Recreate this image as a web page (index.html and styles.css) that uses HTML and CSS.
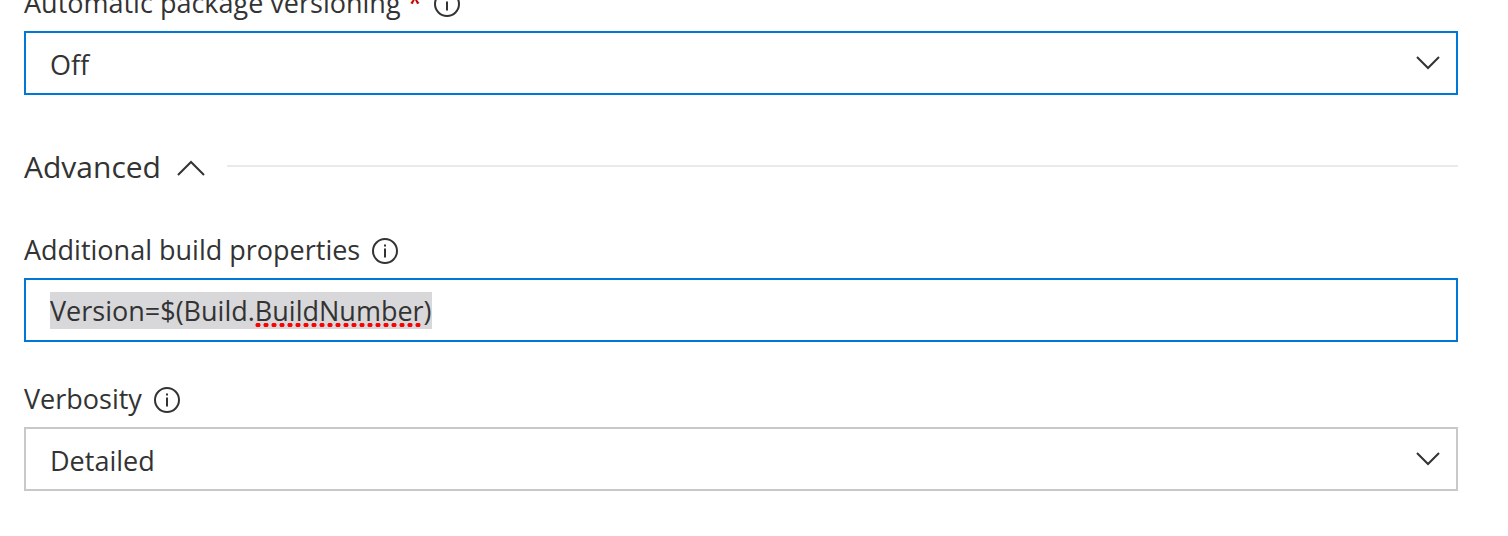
FILE: index.html
```html
<!DOCTYPE html>
<html lang="en">

<head>
    <meta charset="UTF-8">
    <meta name="viewport" content="width=device-width, initial-scale=1.0">
    <title>Build task</title>
    <link rel="stylesheet" href="styles.css">
</head>

<body>
    <form class="panel" onsubmit="return false;">
        <div class="field">
            <div class="field-label">
                <label for="versioning">Automatic package versioning <span class="required">*</span></label>
                <svg class="info" viewBox="0 0 28 28" aria-hidden="true">
                    <circle cx="14" cy="14" r="12" />
                    <path d="M14 11.5v9M14 7.5v2" />
                </svg>
            </div>
            <div class="select-wrap">
                <select id="versioning" class="box active">
                    <option>Off</option>
                </select>
                <svg class="chevron" viewBox="0 0 24 14" aria-hidden="true">
                    <path d="M1 1l11 11L23 1" />
                </svg>
            </div>
        </div>

        <div class="section">
            <button type="button" class="section-toggle" aria-expanded="true">
                Advanced
                <svg class="caret" viewBox="0 0 28 16" aria-hidden="true">
                    <path d="M1 15L14 2l13 13" />
                </svg>
            </button>
            <span class="section-line"></span>
        </div>

        <div class="field">
            <div class="field-label">
                <label for="properties">Additional build properties</label>
                <svg class="info" viewBox="0 0 28 28" aria-hidden="true">
                    <circle cx="14" cy="14" r="12" />
                    <path d="M14 11.5v9M14 7.5v2" />
                </svg>
            </div>
            <div class="input-wrap">
                <input type="text" id="properties" class="box active" value="Version=$(Build.BuildNumber)" spellcheck="false">
                <span class="misspelled"></span>
            </div>
        </div>

        <div class="field">
            <div class="field-label">
                <label for="verbosity">Verbosity</label>
                <svg class="info" viewBox="0 0 28 28" aria-hidden="true">
                    <circle cx="14" cy="14" r="12" />
                    <path d="M14 11.5v9M14 7.5v2" />
                </svg>
            </div>
            <div class="select-wrap">
                <select id="verbosity" class="box">
                    <option>Detailed</option>
                </select>
                <svg class="chevron" viewBox="0 0 24 14" aria-hidden="true">
                    <path d="M1 1l11 11L23 1" />
                </svg>
            </div>
        </div>
    </form>
    <script>
        var properties = document.querySelector("#properties");
        properties.focus({ preventScroll: true });
        properties.select();
    </script>
</body>
</html>
```
FILE: styles.css
```css
* {
    box-sizing: border-box;
}

body {
    margin: 0;
    background-color: #fff;
    color: #333;
    font-family: "Open Sans", "Noto Sans", sans-serif;
    font-size: 27px;
    overflow: hidden;
}

/* the panel is scrolled a little past its first label */
.panel {
    margin-top: -19px;
    padding: 0 50px 0 24px;
}

.field {
    margin-bottom: 35px;
}

.field-label {
    display: flex;
    align-items: center;
    gap: 11px;
    height: 42px;
    margin-bottom: 8px;
}

.required {
    color: #c00000;
}

svg {
    flex: none;
    fill: none;
    stroke: #333;
    stroke-width: 2;
}

.info {
    width: 28px;
    height: 28px;
    margin-top: 4px;
}

.select-wrap,
.input-wrap {
    position: relative;
}

.box {
    display: block;
    width: 100%;
    height: 64px;
    padding: 2px 24px 0;
    border: 2px solid #c8c8c8;
    border-radius: 0;
    outline: none;
    background-color: #fff;
    color: #333;
    font: inherit;
    appearance: none;
}

input.box {
    padding-top: 0;
    line-height: 39px;
}

.box.active {
    border-color: #0078d7;
}

input.box::selection {
    background-color: rgba(216, 216, 218, 0.996);
    color: #333;
}

.chevron {
    position: absolute;
    top: 25px;
    right: 18px;
    width: 24px;
    height: 14px;
    pointer-events: none;
}

.misspelled {
    position: absolute;
    left: 230px;
    bottom: 15px;
    width: 168px;
    height: 4px;
    background: radial-gradient(circle, #f00 2px, transparent 3px) 0 0 / 8px 4px;
    pointer-events: none;
}

.section {
    display: flex;
    align-items: center;
    gap: 22px;
    height: 44px;
    margin: 49px 0 40px;
}

.section-toggle {
    display: flex;
    align-items: center;
    gap: 16px;
    padding: 0;
    border: none;
    background: none;
    color: #333;
    font: inherit;
    font-size: 30px;
}

.caret {
    width: 28px;
    height: 16px;
    margin-top: 3px;
}

.section-line {
    flex: 1;
    height: 2px;
    background-color: #eaeaea;
}
```
